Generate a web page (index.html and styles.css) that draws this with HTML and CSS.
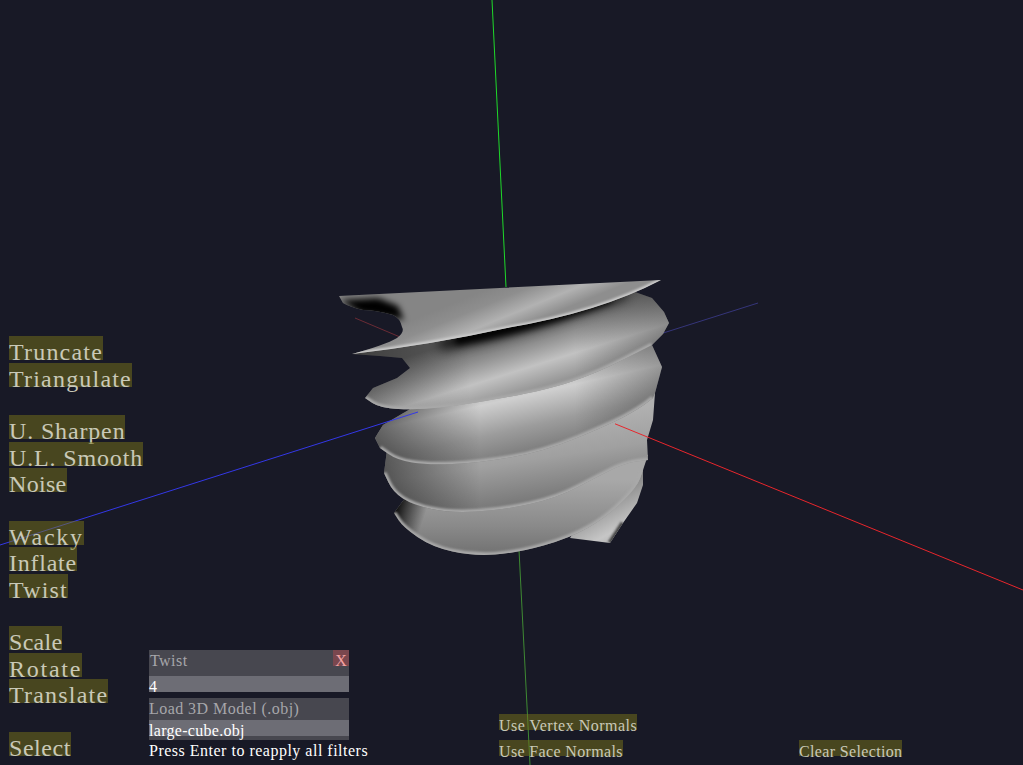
FILE: index.html
```html
<!DOCTYPE html>
<html lang="en">
<head>
<meta charset="utf-8">
<title>Mesh viewer</title>
<link rel="stylesheet" href="styles.css">
</head>
<body>
<div class="app">
  <svg class="scene" viewBox="0 0 1023 765" width="1023" height="765" aria-hidden="true">
    <defs>
      <linearGradient id="blade" gradientUnits="userSpaceOnUse" x1="490" y1="288" x2="508" y2="332">
        <stop offset="0" stop-color="#858585"/><stop offset=".3" stop-color="#8e8e8e"/><stop offset=".68" stop-color="#b2b2b2"/><stop offset="1" stop-color="#8e8e8e"/>
      </linearGradient>
      <linearGradient id="g2" gradientUnits="userSpaceOnUse" x1="500" y1="328" x2="525" y2="408">
        <stop offset="0" stop-color="#5a5a5a"/><stop offset=".28" stop-color="#8c8c8c"/><stop offset=".55" stop-color="#c2c2c2"/><stop offset=".8" stop-color="#989898"/><stop offset="1" stop-color="#7c7c7c"/>
      </linearGradient>
      <linearGradient id="g3" gradientUnits="userSpaceOnUse" x1="515" y1="372" x2="535" y2="460">
        <stop offset="0" stop-color="#a0a0a0"/><stop offset=".28" stop-color="#cfcfcf"/><stop offset=".62" stop-color="#9c9c9c"/><stop offset="1" stop-color="#727272"/>
      </linearGradient>
      <linearGradient id="g4" gradientUnits="userSpaceOnUse" x1="525" y1="425" x2="538" y2="512">
        <stop offset="0" stop-color="#b0b0b0"/><stop offset=".4" stop-color="#a0a0a0"/><stop offset="1" stop-color="#6e6e6e"/>
      </linearGradient>
      <linearGradient id="g5" gradientUnits="userSpaceOnUse" x1="530" y1="480" x2="530" y2="556">
        <stop offset="0" stop-color="#a8a8a8"/><stop offset=".6" stop-color="#8a8a8a"/><stop offset="1" stop-color="#707070"/>
      </linearGradient>
      <linearGradient id="edgeL" gradientUnits="userSpaceOnUse" x1="372" y1="0" x2="480" y2="0">
        <stop offset="0" stop-color="#000" stop-opacity=".55"/><stop offset="1" stop-color="#000" stop-opacity="0"/>
      </linearGradient>
      <linearGradient id="edgeL2" gradientUnits="userSpaceOnUse" x1="352" y1="0" x2="470" y2="0">
        <stop offset="0" stop-color="#000" stop-opacity=".3"/><stop offset="1" stop-color="#000" stop-opacity="0"/>
      </linearGradient>
      <linearGradient id="edgeR" gradientUnits="userSpaceOnUse" x1="575" y1="0" x2="668" y2="0">
        <stop offset="0" stop-color="#000" stop-opacity="0"/><stop offset="1" stop-color="#000" stop-opacity=".28"/>
      </linearGradient>
      <linearGradient id="cornerDark" gradientUnits="userSpaceOnUse" x1="396" y1="505" x2="425" y2="515">
        <stop offset="0" stop-color="#000" stop-opacity=".95"/><stop offset=".35" stop-color="#000" stop-opacity=".6"/><stop offset="1" stop-color="#000" stop-opacity="0"/>
      </linearGradient>
      <linearGradient id="wedge" gradientUnits="userSpaceOnUse" x1="590" y1="505" x2="612" y2="545">
        <stop offset="0" stop-color="#8a8a8a"/><stop offset=".75" stop-color="#c6c6c6"/><stop offset="1" stop-color="#b4b4b4"/>
      </linearGradient>
      <filter id="b1" x="-30%" y="-100%" width="160%" height="300%"><feGaussianBlur stdDeviation="1"/></filter>
      <filter id="b3" x="-30%" y="-100%" width="160%" height="300%"><feGaussianBlur stdDeviation="3"/></filter>
      <filter id="b6" x="-30%" y="-100%" width="160%" height="300%"><feGaussianBlur stdDeviation="6"/></filter>
      <clipPath id="cw"><path d="M570 538 L610 543 L623 523 L637 503 L643 485 L643 465 L600 490Z"/></clipPath>
      <clipPath id="c5"><path d="M405 498 L394 513 L398.5 520 Q403 527 417.5 537 Q432 547 452.5 551.5 Q473 556 495 554.5 Q517 553 543.5 545.5 Q570 538 588.5 527.5 Q607 517 622 502 Q637 487 640 478.5 L643 470 L648 455 L600 440 L400 470Z"/></clipPath>
      <clipPath id="c4"><path d="M387 450 L384 473 L388.5 482.5 Q393 492 403 498.5 Q413 505 431.5 509 Q450 513 476.5 511.5 Q503 510 530 504 Q557 498 577 487.5 Q597 477 611 470 Q625 463 636.5 461.5 L648 460 L647 440 L653 420 L655 393 L600 400 L420 430Z"/></clipPath>
      <clipPath id="c3"><path d="M375 438 L380 448 L388.5 454 Q397 460 412 462.5 Q427 465 452 464 Q477 463 510 457.5 Q543 452 578 437.5 Q613 423 626.5 415.5 Q640 408 646.5 403 L653 398 L655 393 L662 367 L652 345 L520 360 L417 405 L383 425Z"/></clipPath>
      <clipPath id="c2"><path d="M352 354 L635 292 L652 298 L664 312 L669 323 L663 334 L652 345 L624.5 359 Q597 373 572 381.5 Q547 390 505 397.5 Q463 405 440 407.5 Q417 410 398.5 409 Q380 408 372.5 403 L365 398 L373 388 L397 378 L410 368 L402 358 L380 356Z"/></clipPath>
      <clipPath id="c1"><path d="M339 296 L661 280 Q600 312 507 328 Q430 345 352 354 Q385 345 397 338 Q405 332 402 327 Q400 318 393 315 Q375 310 363 310 Q350 307 343 303Z"/></clipPath>
    </defs>

    <line class="axis-green" x1="492" y1="0" x2="506" y2="287"/>
    <line class="axis-green-dim" x1="519" y1="550" x2="530" y2="765"/>
    <line class="axis-red-dim" x1="355" y1="318" x2="400" y2="337"/>
    <line class="axis-blue-dim" x1="660" y1="334" x2="758" y2="303"/>

    <g clip-path="url(#cw)">
      <rect x="560" y="460" width="90" height="90" fill="url(#wedge)"/>
      <path d="M610 543 L623 523" class="shade-edge" filter="url(#b1)"/>
    </g>

    <g clip-path="url(#c5)">
      <rect x="385" y="440" width="270" height="120" fill="url(#g5)"/>
      <rect x="385" y="490" width="60" height="50" fill="url(#cornerDark)"/>
      <path d="M394 513 L398.5 520 Q403 527 417.5 537 Q432 547 452.5 551.5 Q473 556 495 554.5 Q517 553 543.5 545.5 Q570 538 588.5 527.5 Q607 517 622 502 Q637 487 640 478.5 L643 470" class="rim" filter="url(#b1)"/>
    </g>

    <g clip-path="url(#c4)">
      <rect x="380" y="390" width="280" height="130" fill="url(#g4)"/>
      <rect x="380" y="390" width="280" height="130" fill="url(#edgeL)"/>
      <path d="M384 473 L388.5 482.5 Q393 492 403 498.5 Q413 505 431.5 509 Q450 513 476.5 511.5 Q503 510 530 504 Q557 498 577 487.5 Q597 477 611 470 Q625 463 636.5 461.5 L648 460" class="rim" filter="url(#b1)"/>
    </g>

    <g clip-path="url(#c3)">
      <rect x="370" y="340" width="295" height="130" fill="url(#g3)"/>
      <rect x="370" y="340" width="295" height="130" fill="url(#edgeL)"/>
      <rect x="370" y="340" width="295" height="130" fill="url(#edgeR)"/>
      <path d="M380 448 L388.5 454 Q397 460 412 462.5 Q427 465 452 464 Q477 463 510 457.5 Q543 452 578 437.5 Q613 423 626.5 415.5 Q640 408 646.5 403 L653 398" class="rim" filter="url(#b1)"/>
    </g>

    <line class="axis-blue" x1="0" y1="545" x2="418" y2="412"/>

    <g clip-path="url(#c2)">
      <rect x="350" y="285" width="325" height="130" fill="url(#g2)"/>
      <rect x="350" y="285" width="325" height="130" fill="url(#edgeL2)"/>
      <rect x="350" y="285" width="325" height="130" fill="url(#edgeR)"/>
      <path d="M440 344 Q520 332 625 292" class="dark-band" filter="url(#b6)"/>
      <path d="M455 340 Q530 327 610 297" class="dark-core" filter="url(#b3)"/>
      <path d="M365 398 L372.5 403 Q380 408 398.5 409 Q417 410 440 407.5 Q463 405 505 397.5 Q547 390 572 381.5 Q597 373 624.5 359 L652 345" class="rim" filter="url(#b1)"/>
    </g>

    <g clip-path="url(#c1)">
      <rect x="335" y="275" width="330" height="85" fill="url(#blade)"/>
      <path d="M340 300 L378 298 L398 306 L404 320 L360 313Z" class="blade-core" filter="url(#b3)"/>
      <path d="M352 354 Q430 345 507 328 Q600 312 661 280" class="rim rim-blade" filter="url(#b1)"/>
    </g>

    <line class="axis-red" x1="615" y1="423.8" x2="1023" y2="590"/>
  </svg>

  <div class="ui">
    <nav class="tools">
      <button class="tool">Truncate</button>
      <button class="tool">Triangulate</button>
      <div class="spacer"></div>
      <button class="tool tight-1">U. Sharpen</button>
      <button class="tool tight-1">U.L. Smooth</button>
      <button class="tool tight-2">Noise</button>
      <div class="spacer"></div>
      <button class="tool wide">Wacky</button>
      <button class="tool tight-3">Inflate</button>
      <button class="tool">Twist</button>
      <div class="spacer"></div>
      <button class="tool tight-2">Scale</button>
      <button class="tool wide">Rotate</button>
      <button class="tool">Translate</button>
      <div class="spacer"></div>
      <button class="tool tight-4">Select</button>
    </nav>

    <section class="panel">
      <div class="head head-twist"><span>Twist</span><span class="close">X</span></div>
      <div class="field">4</div>
      <div class="head head-load">Load 3D Model (.obj)</div>
      <div class="field field-file">large-cube.obj</div>
      <p class="hint">Press Enter to reapply all filters</p>
    </section>

    <div class="normals">
      <button class="mini mini-vertex">Use Vertex Normals</button>
      <button class="mini">Use Face Normals</button>
    </div>

    <div class="clear">
      <button class="mini">Clear Selection</button>
    </div>
  </div>
</div>
</body>
</html>
```
FILE: styles.css
```css
html, body {
  margin: 0;
  padding: 0;
  background: #181926;
}

.app {
  position: relative;
  width: 1023px;
  height: 765px;
  overflow: hidden;
  background: #181926;
  font-family: "Liberation Serif", serif;
}

.scene {
  position: absolute;
  left: 0;
  top: 0;
}

.axis-green { stroke: #1fd82a; }
.axis-green-dim { stroke: #3f8a33; }
.axis-red { stroke: #e8262c; }
.axis-red-dim { stroke: #6a2b35; }
.axis-blue { stroke: #3438e8; }
.axis-blue-dim { stroke: #35357a; }

.rim {
  fill: none;
  stroke: #a9a9a9;
  stroke-width: 5;
  stroke-linejoin: round;
}
.rim-blade { stroke: #cdcdcd; stroke-width: 4; }

.shade-edge { fill: none; stroke: #444; stroke-width: 5; }
.dark-band { fill: none; stroke: #000; stroke-width: 12; opacity: .8; }
.dark-core { fill: none; stroke: #000; stroke-width: 10; }
.blade-core { fill: #000; }

.ui {
  position: relative;
  height: 756px;
  display: grid;
  grid-template-columns: 149px 350px 300px 1fr;
  align-items: end;
}

button {
  display: block;
  box-sizing: border-box;
  border: 0;
  margin: 0;
  padding: 0;
  background: rgba(120, 115, 24, .5);
  color: #c9c9b8;
  font-family: inherit;
  text-align: left;
  white-space: nowrap;
}

.tools {
  display: flex;
  flex-direction: column;
  align-items: flex-start;
  padding-left: 9px;
  gap: 2.4px;
}

.tool {
  height: 24px;
  padding-top: 1px;
  font-size: 24px;
  line-height: 30px;
  letter-spacing: 1.2px;
}
.tight-1 { letter-spacing: .85px; }
.tight-2 { letter-spacing: .3px; }
.tight-3 { letter-spacing: .75px; }
.tight-4 { letter-spacing: .55px; }
.wide { letter-spacing: 1.75px; }

.spacer { height: 24px; }

.panel {
  width: 200px;
  display: flex;
  flex-direction: column;
  color: #fff;
  font-size: 16px;
  letter-spacing: .45px;
}

.head {
  background: #47474f;
  color: #a6a6aa;
}

.head-twist {
  height: 26px;
  display: flex;
  justify-content: space-between;
  align-items: flex-start;
  line-height: 21px;
  padding-left: 1px;
}

.close {
  width: 16px;
  height: 16px;
  line-height: 21px;
  text-align: center;
  background: #7a474e;
  color: #f3a3a3;
  letter-spacing: 0;
}

.field {
  height: 16px;
  line-height: 21px;
  background: #6d6d75;
}

.head-load {
  height: 22px;
  margin-top: 6px;
  line-height: 21px;
}

.field-file {
  box-shadow: 0 4px 0 #47474f;
  margin-bottom: 4px;
  letter-spacing: .3px;
}

.hint {
  margin: 0;
  height: 16px;
  line-height: 22px;
  letter-spacing: .5px;
  white-space: nowrap;
}

.normals {
  display: flex;
  flex-direction: column;
  align-items: flex-start;
  gap: 10px;
}

.mini {
  height: 16px;
  padding-top: 2px;
  font-size: 16px;
  line-height: 20px;
  letter-spacing: .35px;
}
.mini-vertex { letter-spacing: .48px; }
```
